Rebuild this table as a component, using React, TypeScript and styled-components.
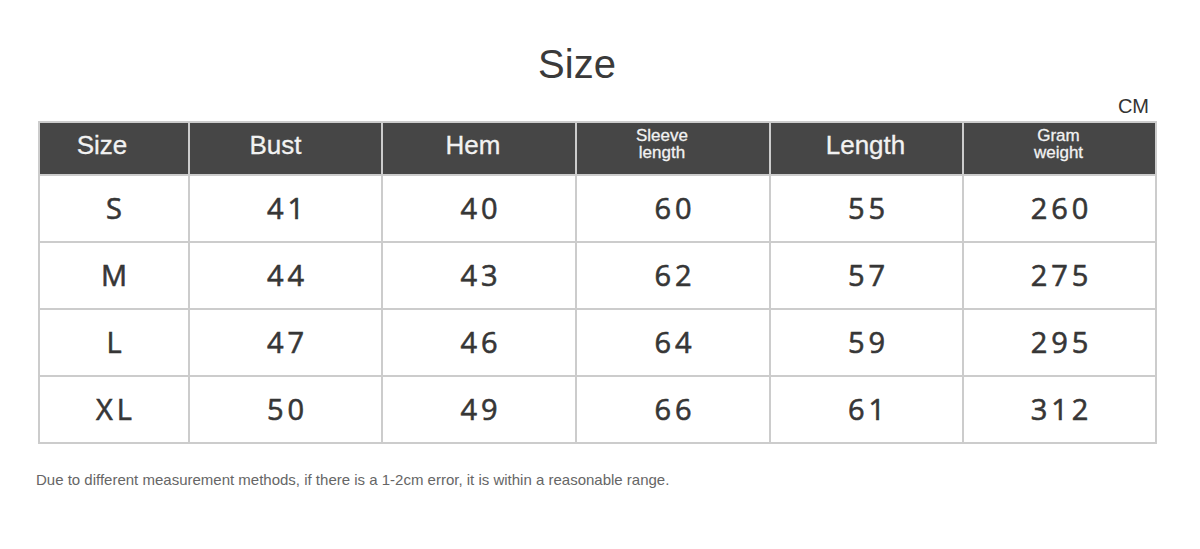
import styled, { createGlobalStyle } from "styled-components";

const GlobalStyle = createGlobalStyle`
  body {
    margin: 0;
    background: #ffffff;
    font-family: "Liberation Sans", Arial, sans-serif;
  }
`;

const Page = styled.div`
  width: 1200px;
  height: 549px;
  display: flex;
  flex-direction: column;
  background: #fff;
`;

const Title = styled.h1`
  margin: 40px 46px 0 0;
  height: 48px;
  line-height: 48px;
  text-align: center;
  font-size: 40px;
  font-weight: 400;
  color: #3a3a3a;
`;

const Unit = styled.div`
  margin: 8px 51px 0 0;
  height: 25px;
  line-height: 20px;
  text-align: right;
  font-size: 20px;
  color: #333;
`;

const Table = styled.div`
  margin-left: 38px;
  width: 1119px;
  box-sizing: border-box;
  display: grid;
  grid-template-columns: 148px 191px 192px 192px 191px 191px;
  grid-template-rows: 51px repeat(4, 65px);
  gap: 2px;
  padding: 2px;
  background: #cccccc;
`;

const HeadCell = styled.div<{ $small?: boolean; $shift: number }>`
  background: #464646;
  color: #f2f2f2;
  display: flex;
  align-items: center;
  justify-content: center;
  text-align: center;
  font-size: ${(p) => (p.$small ? "17px" : "26px")};
  line-height: ${(p) => (p.$small ? "17px" : "30px")};
  padding-bottom: ${(p) => (p.$small ? "9px" : "8px")};
  padding-right: ${(p) => p.$shift * 2}px;
  box-sizing: border-box;
  -webkit-text-stroke: 0.3px #f2f2f2;
`;

const Cell = styled.div`
  background: #fff;
  color: #363636;
  display: flex;
  align-items: center;
  justify-content: center;
  font-family: "Open Sans", "Noto Sans", sans-serif;
  font-size: 29px;
  font-weight: 400;
  -webkit-text-stroke: 0.6px #363636;
  letter-spacing: 4px;
  padding-left: 4px;
  padding-bottom: 2px;
  box-sizing: border-box;
`;

const Note = styled.p`
  margin: 27px 0 0 36px;
  font-size: 15px;
  color: #666;
`;

const headers: { label: string[]; small?: boolean; shift: number }[] = [
  { label: ["Size"], shift: 12 },
  { label: ["Bust"], shift: 10 },
  { label: ["Hem"], shift: 6 },
  { label: ["Sleeve", "length"], small: true, shift: 11 },
  { label: ["Length"], shift: 1 },
  { label: ["Gram", "weight"], small: true, shift: 1 },
];

const rows = [
  ["S", "41", "40", "60", "55", "260"],
  ["M", "44", "43", "62", "57", "275"],
  ["L", "47", "46", "64", "59", "295"],
  ["XL", "50", "49", "66", "61", "312"],
];

function App() {
  return (
    <>
      <GlobalStyle />
      <Page>
        <Title>Size</Title>
        <Unit>CM</Unit>
        <Table>
          {headers.map((h) => (
            <HeadCell key={h.label.join(" ")} $small={h.small} $shift={h.shift}>
              <span>
                {h.label.map((line, i) => (
                  <span key={line}>
                    {i > 0 && <br />}
                    {line}
                  </span>
                ))}
              </span>
            </HeadCell>
          ))}
          {rows.map((row) =>
            row.map((value, i) => <Cell key={row[0] + i}>{value}</Cell>)
          )}
        </Table>
        <Note>
          Due to different measurement methods, if there is a 1-2cm error, it is
          within a reasonable range.
        </Note>
      </Page>
    </>
  );
}

export default App;
